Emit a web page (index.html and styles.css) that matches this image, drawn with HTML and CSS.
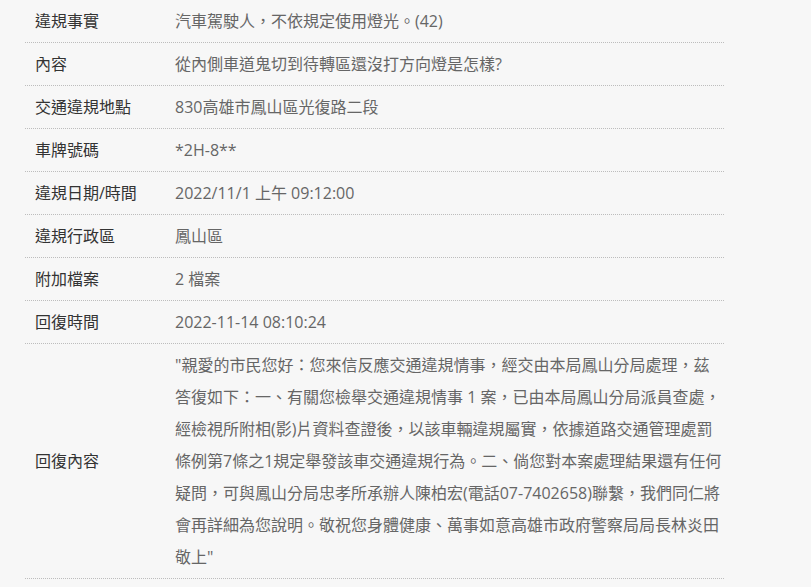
FILE: index.html
```html
<!DOCTYPE html>
<html lang="zh-Hant">
<head>
<meta charset="utf-8">
<title>違規檢舉回覆</title>
<link rel="stylesheet" href="styles.css">
</head>
<body>
<div class="detail">
  <div class="row"><div class="label">違規事實</div><div class="value">汽車駕駛人，不依規定使用燈光。(42)</div></div>
  <div class="row"><div class="label">內容</div><div class="value">從內側車道鬼切到待轉區還沒打方向燈是怎樣?</div></div>
  <div class="row"><div class="label">交通違規地點</div><div class="value">830高雄市鳳山區光復路二段</div></div>
  <div class="row"><div class="label">車牌號碼</div><div class="value">*2H-8**</div></div>
  <div class="row"><div class="label">違規日期/時間</div><div class="value">2022/11/1 上午 09:12:00</div></div>
  <div class="row"><div class="label">違規行政區</div><div class="value">鳳山區</div></div>
  <div class="row"><div class="label">附加檔案</div><div class="value">2 檔案</div></div>
  <div class="row"><div class="label">回復時間</div><div class="value">2022-11-14 08:10:24</div></div>
  <div class="row"><div class="label">回復內容</div><div class="value">"親愛的市民您好：您來信反應交通違規情事，經交由本局鳳山分局處理，茲<br>答復如下：一、有關您檢舉交通違規情事 1 案，已由本局鳳山分局派員查處，<br>經檢視所附相(影)片資料查證後，以該車輛違規屬實，依據道路交通管理處罰<br>條例第7條之1規定舉發該車交通違規行為。二、倘您對本案處理結果還有任何<br>疑問，可與鳳山分局忠孝所承辦人陳柏宏(電話07-7402658)聯繫，我們同仁將<br>會再詳細為您說明。敬祝您身體健康、萬事如意高雄市政府警察局局長林炎田<br>敬上"</div></div>
</div>
</body>
</html>
```
FILE: styles.css
```css
html, body {
  margin: 0;
  padding: 0;
  background: #f7f7f7;
}
body {
  font-family: "Open Sans", "Noto Sans CJK TC", sans-serif;
  font-size: 16px;
  color: #333;
}
.detail {
  width: 699px;
  margin: -1px 0 0 25px;
}
.row {
  display: grid;
  grid-template-columns: 140px 1fr;
  align-items: center;
  border-top: 1px dotted #bdbdbd;
}
.row:last-child {
  border-bottom: 1px dotted #bdbdbd;
}
.label {
  padding: 5px 10px;
  line-height: 32px;
  color: #333;
}
.value {
  padding: 5px 0 5px 10px;
  line-height: 32px;
  color: #666;
  white-space: nowrap;
}
```
